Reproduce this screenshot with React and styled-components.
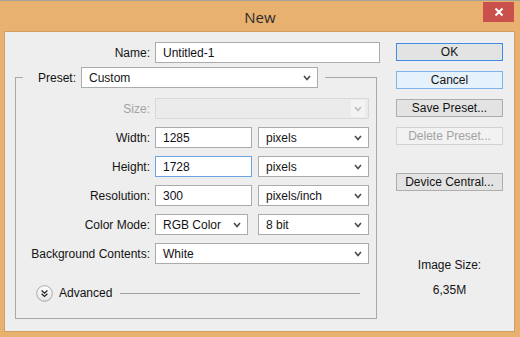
import React from 'react'
import styled, { createGlobalStyle } from 'styled-components'

// css
const GlobalStyle = createGlobalStyle`
	html, body {
		margin: 0;
		padding: 0;
		background: #e8b16f;
	}
	* {
		box-sizing: border-box;
	}
`
const StyleWindow = styled.div`
	display: flex;
	flex-direction: column;
	width: 520px;
	height: 337px;
	background: #e8b16f;
	border-top: 1px solid #a7a29a;
	font-family: "Liberation Sans", Arial, sans-serif;
	font-size: 12px;
	color: #111;
	overflow: hidden;
`
const StyleTitleBar = styled.div`
	display: grid;
	grid-template-columns: 1fr auto 1fr;
	align-items: center;
	height: 30px;
	flex-shrink: 0;
`
const StyleTitle = styled.div`
	grid-column: 2;
	font-family: "Open Sans", "Noto Sans", sans-serif;
	font-size: 15px;
	color: #2b2b2b;
	padding-top: 2px;
`
const StyleClose = styled.div`
	grid-column: 3;
	justify-self: end;
	align-self: start;
	display: flex;
	align-items: center;
	justify-content: center;
	width: 31px;
	height: 20px;
	margin-top: 1px;
	margin-right: 6px;
	background: #c9504b;
	color: #fff;
`
const StyleClient = styled.div`
	display: flex;
	flex: 1;
	margin: 0 5px 5px 4px;
	background: #eeeeee;
	border: 1px solid #d29f63;
`
const StyleLeft = styled.div`
	display: flex;
	flex-direction: column;
	width: 362px;
	margin-left: 10px;
	padding-top: 10px;
`
const StyleRight = styled.div`
	display: flex;
	flex-direction: column;
	align-items: center;
	width: 107px;
	margin-left: 19px;
	padding-top: 11px;
`
const StyleRow = styled.div`
	display: grid;
	grid-template-columns: ${props => props.$label}px ${props => (props.$field ? `${props.$field}px` : '1fr')};
	column-gap: 5px;
	align-items: center;
	height: 21px;
	margin-top: ${props => props.$top || 0}px;
`
const StyleLabel = styled.div`
	text-align: right;
	white-space: nowrap;
	color: ${props => (props.$disabled ? '#a3a3a3' : '#141414')};
`
const StyleField = styled.input`
	height: 21px;
	width: ${props => (props.$width ? `${props.$width}px` : '100%')};
	padding: 0 7px;
	border: 1px solid ${props => (props.$focus ? '#6aa5e2' : '#ababab')};
	background: #fff;
	font-family: "Liberation Sans", Arial, sans-serif;
	font-size: 12px;
	color: #101020;
	outline: none;
`
const StylePair = styled.div`
	display: flex;
	gap: ${props => props.$gap || 6}px;
	justify-content: space-between;
`
const StyleSelect = styled.div`
	display: flex;
	align-items: center;
	justify-content: space-between;
	height: 21px;
	width: ${props => (props.$width ? `${props.$width}px` : '100%')};
	padding: 0 6px 0 7px;
	border: 1px solid ${props => (props.$disabled ? '#d9d9d9' : '#ababab')};
	background: ${props => (props.$disabled ? '#ebebeb' : '#fff')};
	color: #141414;
	white-space: nowrap;
`
const StyleArrow = styled.span`
	display: flex;
	align-items: center;
	justify-content: center;
	width: 14px;
	height: 17px;
	margin-right: -3px;
	background: ${props => (props.$disabled ? '#f3f3f3' : 'transparent')};
`
const StyleGroup = styled.fieldset`
	margin: 4px 0 0 0;
	padding: 10px 7px 17px 7px;
	border: 1px solid #a9a9a9;
	min-width: 0;
`
const StyleLegend = styled.legend`
	display: flex;
	align-items: center;
	gap: 5px;
	padding: 0 7px 0 15px;
	height: 21px;
`
const StyleAdvanced = styled.div`
	display: flex;
	align-items: center;
	height: 16px;
	margin-top: 21px;
	padding-left: 13px;
	padding-right: 9px;
	gap: 6px;
`
const StyleRule = styled.div`
	flex: 1;
	height: 1px;
	background: #a2a2a2;
	margin-left: 2px;
`
const StyleButton = styled.div`
	display: flex;
	align-items: center;
	justify-content: center;
	width: 107px;
	height: 18px;
	margin-bottom: ${props => props.$after ?? 10}px;
	border: 1px solid ${props => (props.$variant === 'default' ? '#3c8ee6' : props.$variant === 'hover' ? '#7eb4ea' : props.$variant === 'disabled' ? '#d2d2d2' : '#adadad')};
	background: ${props => (props.$variant === 'hover' ? '#e5f1fb' : props.$variant === 'disabled' ? '#f2f2f2' : '#e3e3e3')};
	color: ${props => (props.$variant === 'disabled' ? '#a2a2a2' : '#141414')};
	white-space: nowrap;
`
const StyleInfo = styled.div`
	line-height: 14px;
	margin-top: ${props => props.$top}px;
	color: #141414;
`

// Composants
function Chevron({ disabled }) {
	return (
		<StyleArrow $disabled={disabled}>
			<svg width="8" height="6" viewBox="0 0 8 6">
				<polyline points="1,1 4,4.5 7,1" fill="none" stroke={disabled ? '#bdbdbd' : '#4a4a4a'} strokeWidth="1.6" />
			</svg>
		</StyleArrow>
	)
}

function Select({ text, width, disabled }) {
	return (
		<StyleSelect $width={width} $disabled={disabled}>
			<span>{text}</span>
			<Chevron disabled={disabled} />
		</StyleSelect>
	)
}

function AdvancedIcon() {
	return (
		<svg width="17" height="17" viewBox="0 0 17 17">
			<defs>
				<linearGradient id="adv" x1="0" y1="0" x2="0" y2="1">
					<stop offset="0" stopColor="#ffffff" />
					<stop offset="1" stopColor="#e4e4e4" />
				</linearGradient>
			</defs>
			<circle cx="8.5" cy="8.5" r="7.8" fill="url(#adv)" stroke="#a8a8a8" />
			<polyline points="5.6,5.6 8.5,8.2 11.4,5.6" fill="none" stroke="#222" strokeWidth="1.3" />
			<polyline points="5.6,8.8 8.5,11.4 11.4,8.8" fill="none" stroke="#222" strokeWidth="1.3" />
		</svg>
	)
}

const rows = [
	{ label: 'Width:', value: '1285', unit: 'pixels' },
	{ label: 'Height:', value: '1728', unit: 'pixels', focus: true },
	{ label: 'Resolution:', value: '300', unit: 'pixels/inch' },
]

const buttons = [
	{ text: 'OK', variant: 'default' },
	{ text: 'Cancel', variant: 'hover' },
	{ text: 'Save Preset...' },
	{ text: 'Delete Preset...', variant: 'disabled', after: 28 },
	{ text: 'Device Central...', after: 0 },
]

function App() {
	return (
		<>
			<GlobalStyle />
			<StyleWindow>
				<StyleTitleBar>
					<StyleTitle>New</StyleTitle>
					<StyleClose>
						<svg width="10" height="10" viewBox="0 0 10 10">
							<path d="M1.5 1.5 L8.5 8.5 M8.5 1.5 L1.5 8.5" stroke="#fff" strokeWidth="2" />
						</svg>
					</StyleClose>
				</StyleTitleBar>
				<StyleClient>
					<StyleLeft>
						<StyleRow $label={135} $field={225}>
							<StyleLabel>Name:</StyleLabel>
							<StyleField $width={225} defaultValue="Untitled-1" readOnly />
						</StyleRow>
						<StyleGroup>
							<StyleLegend>
								<span>Preset:</span>
								<Select text="Custom" width={237} />
							</StyleLegend>
							<StyleRow $label={127}>
								<StyleLabel $disabled>Size:</StyleLabel>
								<Select text="" disabled />
							</StyleRow>
							{rows.map((row) => (
								<StyleRow $label={127} $top={8} key={row.label}>
									<StyleLabel>{row.label}</StyleLabel>
									<StylePair>
										<StyleField $width={97} $focus={row.focus} defaultValue={row.value} readOnly />
										<Select text={row.unit} width={111} />
									</StylePair>
								</StyleRow>
							))}
							<StyleRow $label={127} $top={8}>
								<StyleLabel>Color Mode:</StyleLabel>
								<StylePair>
									<Select text="RGB Color" width={93} />
									<Select text="8 bit" width={111} />
								</StylePair>
							</StyleRow>
							<StyleRow $label={127} $top={8}>
								<StyleLabel>Background Contents:</StyleLabel>
								<Select text="White" />
							</StyleRow>
							<StyleAdvanced>
								<AdvancedIcon />
								<span>Advanced</span>
								<StyleRule />
							</StyleAdvanced>
						</StyleGroup>
					</StyleLeft>
					<StyleRight>
						{buttons.map((b) => (
							<StyleButton key={b.text} $variant={b.variant} $after={b.after}>
								{b.text}
							</StyleButton>
						))}
						<StyleInfo $top={67}>Image Size:</StyleInfo>
						<StyleInfo $top={11}>6,35M</StyleInfo>
					</StyleRight>
				</StyleClient>
			</StyleWindow>
		</>
	)
}

export default App
